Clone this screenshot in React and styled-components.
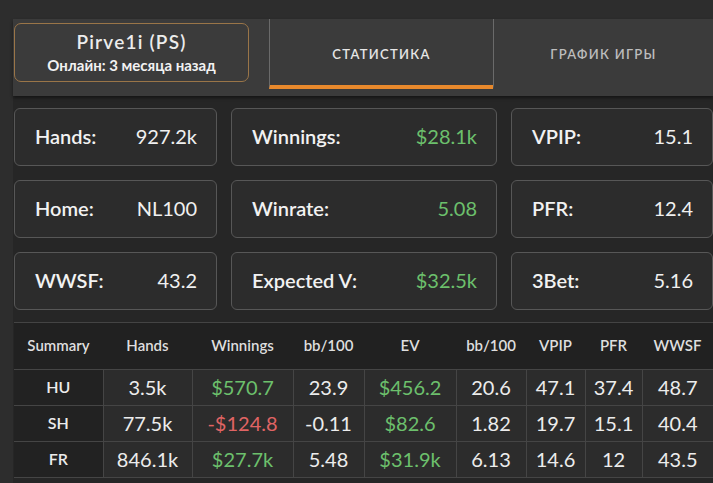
import React from "react";
import styled, { createGlobalStyle } from "styled-components";

const Global = createGlobalStyle`
  html, body { margin: 0; padding: 0; background: #2d2d2d; }
  body { font-family: Lato, "Noto Sans", "Open Sans", sans-serif; color: #ececec; }
`;

const Page = styled.div`
  width: 713px;
  height: 483px;
  padding: 19px 0 0 13px;
  box-sizing: border-box;
  overflow: hidden;
`;

const Main = styled.div`
  background: #262626;
  height: 100%;
`;

const Header = styled.header`
  height: 77px;
  background: #3b3b3b;
  display: flex;
  align-items: flex-start;
  box-shadow: 0 2px 3px rgba(0, 0, 0, 0.45);
  position: relative;
  z-index: 1;
`;

const Profile = styled.div`
  margin: 4px 0 0 1px;
  width: 235px;
  height: 59px;
  box-sizing: border-box;
  border: 1px solid #9a7548;
  border-radius: 7px;
  display: flex;
  flex-direction: column;
  align-items: center;
  justify-content: center;
  gap: 3px;
`;

const Name = styled.div`
  font-size: 19px;
  font-weight: 600;
  letter-spacing: 1.2px;
  color: #ececec;
  line-height: 22px;
`;

const Online = styled.div`
  font-size: 15px;
  font-weight: 700;
  color: #f2f2f2;
  line-height: 18px;
`;

const Tabs = styled.nav`
  margin-left: 20px;
  flex: 1;
  display: flex;
  height: 70px;
`;

const Tab = styled.div`
  width: ${(p) => p.$w};
  flex: ${(p) => (p.$w ? "none" : 1)};
  box-sizing: border-box;
  border-left: 1px solid #6a6a6a;
  border-bottom: 4px solid ${(p) => (p.$active ? "#e8892c" : "transparent")};
  display: flex;
  align-items: center;
  justify-content: center;
  padding-top: 4px;
  font-size: 13px;
  font-weight: 600;
  letter-spacing: 1.3px;
  color: ${(p) => (p.$active ? "#e6e6e6" : "#bdbdbd")};
`;

const Content = styled.div`
  padding: 12px 0 0 1px;
`;

const Cards = styled.div`
  display: grid;
  grid-template-columns: 203px 266px 202px;
  grid-auto-rows: 58px;
  column-gap: 14px;
  row-gap: 14px;
`;

const Card = styled.div`
  box-sizing: border-box;
  background: #2c2c2c;
  border: 1px solid #575757;
  border-radius: 6px;
  display: flex;
  align-items: center;
  justify-content: space-between;
  padding: 0 19px 2px 20px;
  font-size: 20px;
`;

const Label = styled.span`
  font-weight: 600;
  color: #f2f2f2;
`;

const Value = styled.span`
  font-weight: 400;
  color: ${(p) => (p.$tone === "green" ? "#6cc06c" : p.$tone === "red" ? "#e06464" : "#f0f0f0")};
`;

const Table = styled.table`
  margin-top: 12px;
  width: 699px;
  border-collapse: collapse;
  table-layout: fixed;
  border-top: 1px solid #444;
`;

const Th = styled.th`
  height: 47px;
  box-sizing: border-box;
  background: #212121;
  font-size: 15px;
  font-weight: 600;
  color: #dedede;
  text-align: center;
  padding: 0 0 2px;
`;

const Td = styled.td`
  height: 36px;
  box-sizing: border-box;
  border: 1px solid #454545;
  background: ${(p) => (p.$head ? "#222222" : "#2c2c2c")};
  text-align: center;
  font-size: ${(p) => (p.$head ? "16px" : "20px")};
  font-weight: ${(p) => (p.$head ? 600 : 400)};
  padding: 0 0 2px;
  color: ${(p) => (p.$tone === "green" ? "#6cc06c" : p.$tone === "red" ? "#e06464" : "#ececec")};
  &:first-child { border-left: none; }
  &:last-child { border-right: none; }
`;

const cards = [
  ["Hands:", "927.2k"],
  ["Winnings:", "$28.1k", "green"],
  ["VPIP:", "15.1"],
  ["Home:", "NL100"],
  ["Winrate:", "5.08", "green"],
  ["PFR:", "12.4"],
  ["WWSF:", "43.2"],
  ["Expected V:", "$32.5k", "green"],
  ["3Bet:", "5.16"],
];

const cols = [89, 89, 101, 71, 92, 70, 59, 57, 71];
const heads = ["Summary", "Hands", "Winnings", "bb/100", "EV", "bb/100", "VPIP", "PFR", "WWSF"];
const rows = [
  ["HU", "3.5k", ["$570.7", "green"], "23.9", ["$456.2", "green"], "20.6", "47.1", "37.4", "48.7"],
  ["SH", "77.5k", ["-$124.8", "red"], "-0.11", ["$82.6", "green"], "1.82", "19.7", "15.1", "40.4"],
  ["FR", "846.1k", ["$27.7k", "green"], "5.48", ["$31.9k", "green"], "6.13", "14.6", "12", "43.5"],
];

export default function App() {
  return (
    <>
      <Global />
      <Page>
        <Main>
          <Header>
            <Profile>
              <Name>Pirve1i (PS)</Name>
              <Online>Онлайн: 3 месяца назад</Online>
            </Profile>
            <Tabs>
              <Tab $active $w="224px">СТАТИСТИКА</Tab>
              <Tab>ГРАФИК ИГРЫ</Tab>
            </Tabs>
          </Header>
          <Content>
            <Cards>
              {cards.map(([l, v, t]) => (
                <Card key={l}>
                  <Label>{l}</Label>
                  <Value $tone={t}>{v}</Value>
                </Card>
              ))}
            </Cards>
            <Table>
              <colgroup>
                {cols.map((w, i) => (
                  <col key={i} style={{ width: w }} />
                ))}
              </colgroup>
              <thead>
                <tr>
                  {heads.map((h, i) => (
                    <Th key={i}>{h}</Th>
                  ))}
                </tr>
              </thead>
              <tbody>
                {rows.map((r) => (
                  <tr key={r[0]}>
                    {r.map((c, i) => {
                      const [txt, tone] = Array.isArray(c) ? c : [c];
                      return (
                        <Td key={i} $head={i === 0} $tone={tone}>
                          {txt}
                        </Td>
                      );
                    })}
                  </tr>
                ))}
              </tbody>
            </Table>
          </Content>
        </Main>
      </Page>
    </>
  );
}
